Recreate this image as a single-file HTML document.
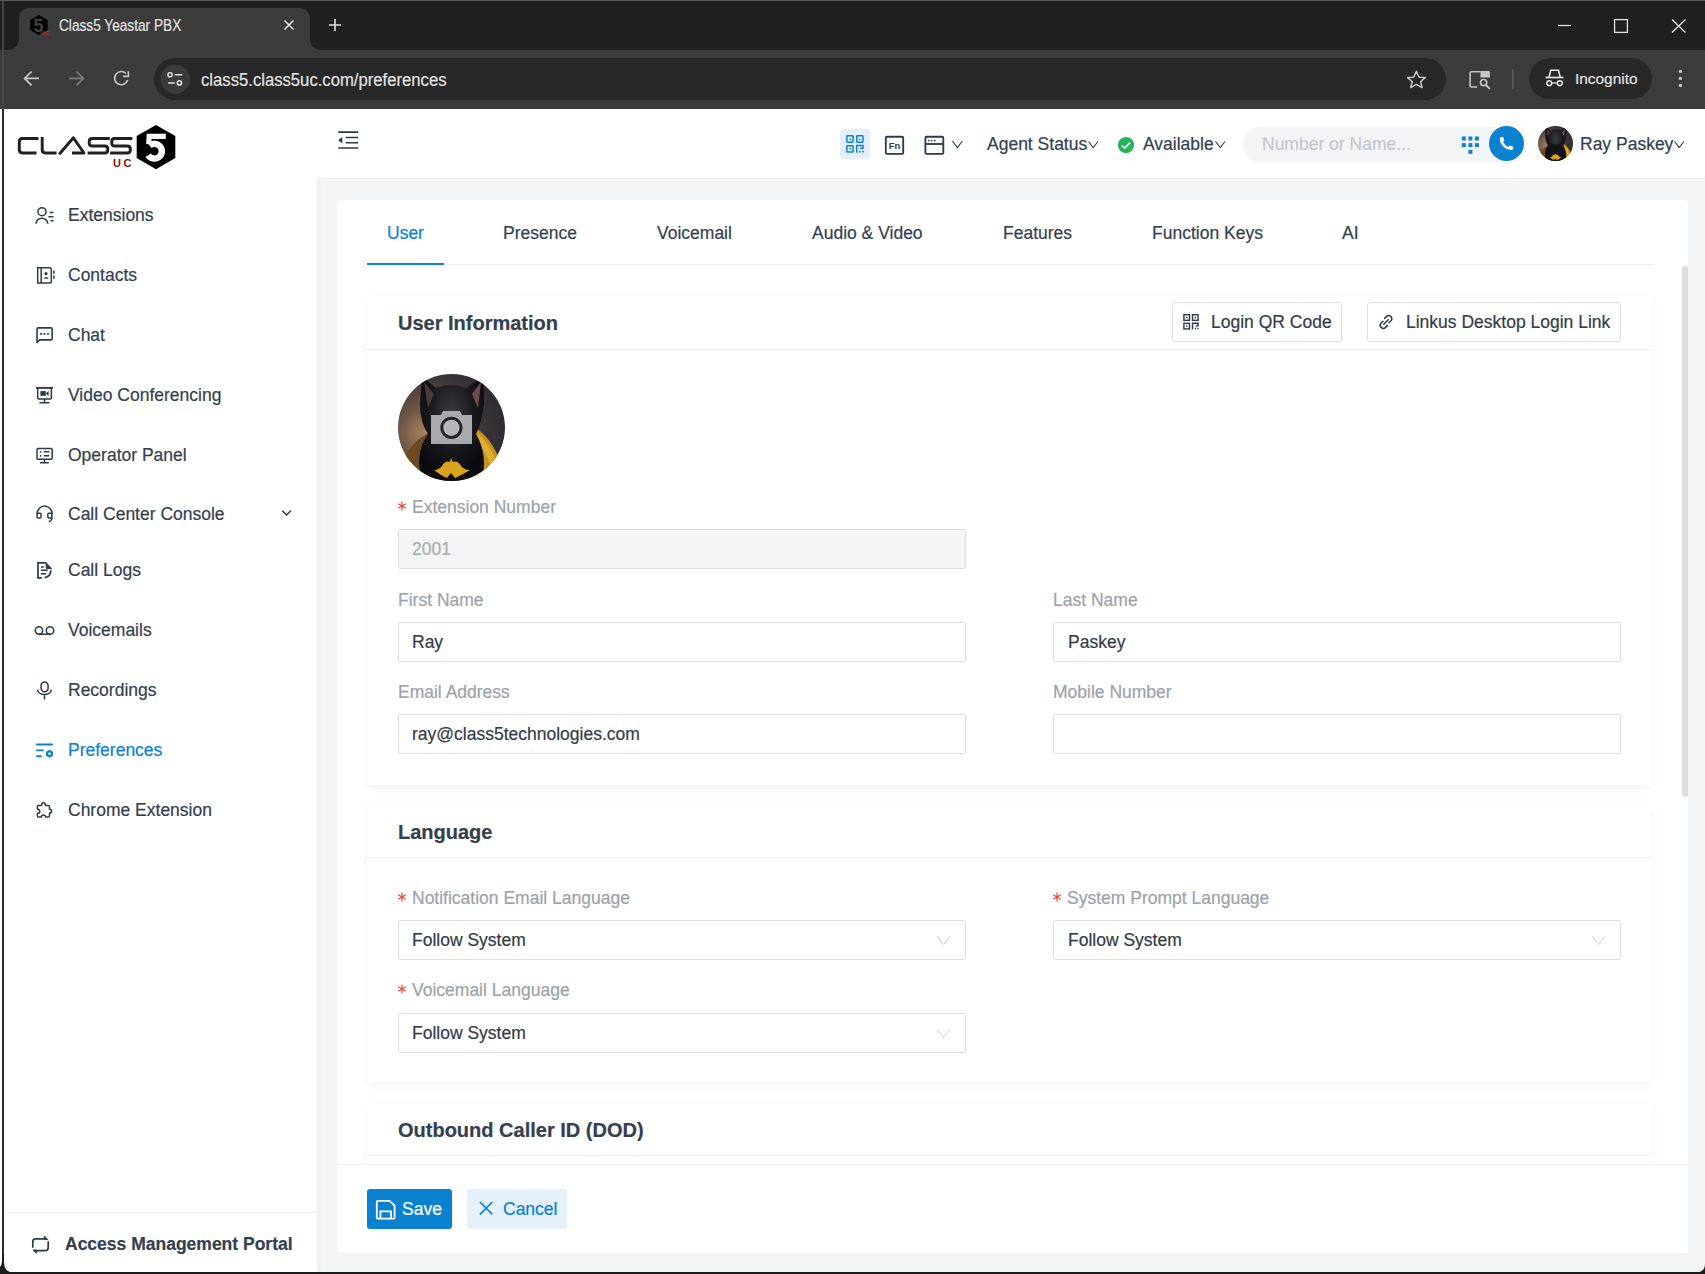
<!DOCTYPE html>
<html><head><meta charset="utf-8">
<style>
*{box-sizing:border-box;margin:0;padding:0}
html,body{width:1705px;height:1274px;overflow:hidden;background:#f4f5f7;font-family:"Liberation Sans",sans-serif;-webkit-text-stroke:0.2px currentColor}
.a{position:absolute}
#frame{left:0;top:0;width:1705px;height:50px;background:#202020}
#toolbar{left:0;top:50px;width:1705px;height:59px;background:#3c3c3c}
#tab{left:19px;top:8px;width:291px;height:42px;background:#3c3c3c;border-radius:10px 10px 0 0}
#tab:before,#tab:after{content:"";position:absolute;bottom:0;width:10px;height:10px;background:radial-gradient(circle at 0 0,transparent 10px,#3c3c3c 10.5px)}
#tab:before{left:-10px;background:radial-gradient(circle at 0 0,transparent 9.5px,#3c3c3c 10px)}
#tab:after{right:-10px;background:radial-gradient(circle at 100% 0,transparent 9.5px,#3c3c3c 10px)}
.tabtitle{left:59px;top:17px;font-size:15.6px;transform-origin:0 0;transform:scaleX(0.876);color:#e3e3e3;white-space:nowrap}
#omni{left:154px;top:58px;width:1292px;height:42px;border-radius:21px;background:#282828}
.url{left:201px;top:70px;font-size:18px;transform-origin:0 0;transform:scaleX(0.926);color:#e3e3e3;white-space:nowrap}
#incog{left:1529px;top:58px;width:123px;height:41px;border-radius:21px;background:#282828}
.inctxt{left:1575px;top:70px;font-size:15.4px;color:#e3e3e3;white-space:nowrap}
#page{left:0;top:109px;width:1705px;height:1165px;background:#f4f5f7}
#winl{left:2px;top:109px;width:2px;height:1165px;background:#2a2a2a}
#winl2{left:2px;top:1px;width:2px;height:108px;background:#464646}
#winb{left:0;top:1272px;width:1705px;height:2px;background:#1c1c1c}
#side{left:4px;top:109px;width:313px;height:1163px;background:#fff;box-shadow:2px 0 6px rgba(0,0,0,.03)}
#header{left:317px;top:109px;width:1388px;height:70px;background:#fff;border-bottom:1px solid #eceef1}
.hdr{top:134px;font-size:17.5px;color:#333f4f;white-space:nowrap}
.nav{left:68px;font-size:17.5px;color:#333f4f;white-space:nowrap}
.nav.act{color:#0a82d0}
.ico{position:absolute}
#card{left:337px;top:200px;width:1351px;height:1053px;background:#fff;border-radius:3px}
.tabs{top:223px;font-size:17.5px;color:#333f4f;white-space:nowrap}
.tabs.act{color:#0a82d0}
#tabline{left:367px;top:264px;width:1286px;height:1px;background:#eceef1}
#tabul{left:367px;top:262.5px;width:77px;height:2.5px;background:#0a82d0}
.sec{left:367px;width:1285px;background:#fff;border-radius:2px;box-shadow:0 3px 10px rgba(0,0,0,.055)}
.sech{left:398px;font-size:20px;font-weight:bold;color:#333f4f;white-space:nowrap}
.secline{left:367px;width:1285px;height:1px;background:#eceef1}
.lbl{font-size:17.5px;color:#9da2a9;white-space:nowrap}
.ast{position:absolute;left:-1.7px;top:3.4px}
.lblr{padding-left:14px}
.inp{width:568px;height:40px;border:1px solid #dcdfe4;border-radius:2px;background:#fff}
.inp.dis{background:#f4f5f7}
.val{font-size:17.5px;color:#333c48;white-space:nowrap}
.btn{border:1px solid #dcdfe4;border-radius:3px;background:#fff;height:40px}
</style></head><body>
<div class="a" id="frame"></div>
<div class="a" id="toolbar"></div>
<div class="a" id="tab"></div>
<div class="a tabtitle">Class5 Yeastar PBX</div>
<div class="a" id="omni"></div>
<div class="a url">class5.class5uc.com/preferences</div>
<div class="a" id="incog"></div>
<div class="a inctxt">Incognito</div>


<!-- browser chrome -->
<div class="a" style="left:0;top:0;width:1705px;height:1px;background:#5b5b5b"></div>
<svg class="a" style="left:0;top:0" width="1705" height="110" viewBox="0 0 1705 110">
  <!-- favicon -->
  <polygon points="38.8,14.9 47.6,20 47.6,30 38.8,35 30,30 30,20" fill="#000"/>
  <text x="38.6" y="31.9" font-family="Liberation Sans" font-weight="bold" font-size="18" fill="#404040" text-anchor="middle">5</text>
  <text x="41" y="35" font-family="Liberation Sans" font-weight="bold" font-size="5" fill="#c0282c" letter-spacing="0.5">UC</text>
  <!-- tab close -->
  <path d="M284.5,20.5 L293.5,29.5 M293.5,20.5 L284.5,29.5" stroke="#e3e3e3" stroke-width="1.6"/>
  <!-- new tab -->
  <path d="M335,19 V31 M329,25 H341" stroke="#e3e3e3" stroke-width="1.6"/>
  <!-- window controls -->
  <path d="M1558,25.5 H1571" stroke="#e3e3e3" stroke-width="1.3"/>
  <rect x="1614.6" y="19.6" width="12.8" height="12.8" fill="none" stroke="#e3e3e3" stroke-width="1.3"/>
  <path d="M1672,19.5 L1685.5,32.5 M1685.5,19.5 L1672,32.5" stroke="#e3e3e3" stroke-width="1.3"/>
  <!-- back / fwd / reload -->
  <path d="M39,78.4 H25 M31.6,71.5 L24.6,78.4 L31.6,85.3" fill="none" stroke="#c7c7c7" stroke-width="1.7"/>
  <path d="M69,78.4 H83 M76.4,71.5 L83.4,78.4 L76.4,85.3" fill="none" stroke="#7c7c7c" stroke-width="1.7"/>
  <path d="M127.6,80 A6.6,6.6 0 1 1 126,73.5" fill="none" stroke="#c7c7c7" stroke-width="1.7"/>
  <path d="M128.4,71.2 V76.4 H123.2" fill="none" stroke="#c7c7c7" stroke-width="1.7"/>
  <!-- site info -->
  <circle cx="175.2" cy="79.2" r="14.7" fill="#3b3b3b"/>
  <circle cx="170" cy="74.8" r="2.1" fill="none" stroke="#e3e3e3" stroke-width="1.5"/>
  <path d="M174.8,74.8 H182.2 M168.2,82.9 H174.8" stroke="#e3e3e3" stroke-width="1.5"/>
  <circle cx="179.4" cy="82.9" r="2.1" fill="none" stroke="#e3e3e3" stroke-width="1.5"/>
  <!-- star -->
  <polygon points="1416.4,71.2 1419.1,77.3 1425.2,77.6 1420.6,81.8 1422.1,87.6 1416.4,84.4 1410.7,87.6 1412.2,81.8 1407.6,77.6 1413.7,77.3" fill="none" stroke="#c7c7c7" stroke-width="1.5" stroke-linejoin="round"/>
  <!-- lens -->
  <path d="M1477.2,87 H1471.4 Q1470.1,87 1470.1,85.7 V73.1 Q1470.1,71.8 1471.4,71.8 H1480.6" fill="none" stroke="#c7c7c7" stroke-width="1.6"/>
  <path d="M1480.5,71 H1488.6 Q1489.9,71 1489.9,72.3 V77.4 H1480.5 Z" fill="#c7c7c7"/>
  <circle cx="1483.6" cy="82.6" r="3.1" fill="none" stroke="#c7c7c7" stroke-width="1.7"/>
  <path d="M1485.9,85 L1489.8,88.9" stroke="#c7c7c7" stroke-width="1.8"/>
  <rect x="1512" y="69.5" width="1.6" height="19.4" fill="#5e5e5e"/>
  <!-- incognito icon -->
  <path d="M1549,77.2 L1550.7,70.2 H1558.5 L1560.2,77.2" fill="none" stroke="#e3e3e3" stroke-width="1.6"/>
  <path d="M1545.6,77.5 H1563.5" stroke="#e3e3e3" stroke-width="1.7"/>
  <circle cx="1549.3" cy="83.2" r="2.4" fill="none" stroke="#e3e3e3" stroke-width="1.5"/>
  <circle cx="1559.8" cy="83.2" r="2.4" fill="none" stroke="#e3e3e3" stroke-width="1.5"/>
  <path d="M1551.7,83 H1557.4" stroke="#e3e3e3" stroke-width="1.3"/>
  <!-- kebab -->
  <circle cx="1680.4" cy="71.4" r="1.7" fill="#c7c7c7"/>
  <circle cx="1680.4" cy="78.4" r="1.7" fill="#c7c7c7"/>
  <circle cx="1680.4" cy="85.5" r="1.7" fill="#c7c7c7"/>
</svg>

<div class="a" id="page"></div>
<div class="a" id="side"></div>
<div class="a" id="header"></div>
<!-- header contents -->
<svg class="a" style="left:330px;top:120px" width="40" height="40" viewBox="0 0 40 40" fill="none" stroke="#2e3a4a" stroke-width="1.6">
 <path d="M8.2,12.1 H28.2 M15.7,17.5 H28.2 M15.7,22.8 H28.2 M8.2,28 H28.2"/>
 <path d="M8.2,20.2 L12.3,17 V23.4 Z" fill="#2e3a4a" stroke="none"/>
</svg>
<div class="a" style="left:840px;top:129px;width:30px;height:30px;border-radius:4px;background:#e3f0fb"></div>
<svg class="a" style="left:835px;top:125px" width="40" height="40" viewBox="0 0 40 40" fill="none" stroke="#0a82d0" stroke-width="1.5">
 <rect x="11.85" y="10.75" width="6.2" height="6.4" rx="0.6"/><rect x="21.75" y="10.75" width="6.2" height="6.4" rx="0.6"/><rect x="11.85" y="20.65" width="6.2" height="6.4" rx="0.6"/>
 <circle cx="15.4" cy="14.3" r="0.9" fill="#0a82d0" stroke="none"/><circle cx="24.6" cy="14.3" r="0.9" fill="#0a82d0" stroke="none"/><circle cx="15.2" cy="23.6" r="0.9" fill="#0a82d0" stroke="none"/>
 <path d="M21.7,27.8 V20.6 H27.9 V23.2 H25.2"/>
 <rect x="24" y="25.9" width="1.6" height="1.6" fill="#0a82d0" stroke="none"/><rect x="27.1" y="25.9" width="1.6" height="1.6" fill="#0a82d0" stroke="none"/>
</svg>
<svg class="a" style="left:878px;top:125px" width="90" height="40" viewBox="0 0 90 40" fill="none" stroke="#2e3a4a" stroke-width="1.85">
 <rect x="7.8" y="11.7" width="17.4" height="17.2" rx="1.2"/>
 <text x="10.7" y="23.8" font-family="Liberation Sans" font-weight="bold" font-size="9.4" fill="#2e3a4a" stroke="none">Fn</text>
 <rect x="47.4" y="11.7" width="17.9" height="17.2" rx="1.2"/>
 <path d="M47.4,19 H65.3"/>
 <circle cx="50.7" cy="15.6" r="0.9" fill="#2e3a4a" stroke="none"/><circle cx="53.6" cy="15.6" r="0.9" fill="#2e3a4a" stroke="none"/><circle cx="56.8" cy="15.6" r="0.9" fill="#2e3a4a" stroke="none"/>
 <path d="M74.4,16 L79.4,22.6 L84.4,16" stroke-width="1.1"/>
</svg>
<div class="a hdr" style="left:987px">Agent Status</div>
<svg class="a" style="left:1086px;top:138px" width="16" height="14" viewBox="0 0 16 14" fill="none" stroke="#2e3a4a" stroke-width="1.1"><path d="M2.5,3.5 L7.2,9.5 L12,3.5"/></svg>
<svg class="a" style="left:1116px;top:135px" width="20" height="20" viewBox="0 0 20 20">
 <circle cx="10" cy="10.05" r="8.1" fill="#23b35a"/><path d="M5.8,10.3 L8.7,13 L14.1,7.6" fill="none" stroke="#fff" stroke-width="1.7"/>
</svg>
<div class="a hdr" style="left:1143px">Available</div>
<svg class="a" style="left:1213px;top:138px" width="16" height="14" viewBox="0 0 16 14" fill="none" stroke="#2e3a4a" stroke-width="1.1"><path d="M2.5,3.5 L7.2,9.5 L12,3.5"/></svg>
<div class="a" style="left:1243px;top:127px;width:270px;height:35px;border-radius:17.5px;background:#f3f4f6"></div>
<div class="a hdr" style="left:1262px;color:#c4c7cc">Number or Name...</div>
<svg class="a" style="left:1455px;top:122px" width="80" height="44" viewBox="0 0 80 44" fill="#0a82d0">
 <rect x="6.8" y="14.5" width="4" height="4"/><rect x="13.4" y="14.5" width="4" height="4"/><rect x="19.9" y="14.5" width="4" height="4"/>
 <rect x="6.8" y="21.1" width="4" height="4"/><rect x="13.4" y="21.1" width="4" height="4"/><rect x="19.9" y="21.1" width="4" height="4"/>
 <rect x="13.4" y="27.9" width="4" height="4"/>
 <circle cx="51.5" cy="21.5" r="17.5"/>
 <path d="M44.8,16.2 Q45.3,14.9 46.6,15 L48.2,15.1 L49.3,18.6 L48.1,19.9 Q49.5,23.5 53.5,24.9 L54.8,23.6 L58.2,24.8 L58.2,26.6 Q58.1,27.9 56.8,28 Q50.6,27.8 47.2,23.6 Q44.6,20.3 44.8,16.2 Z" fill="#fff"/>
</svg>
<!-- header avatar -->
<svg class="a" style="left:1538px;top:126px" width="35" height="35" viewBox="0 0 107 107">
 <defs>
  <clipPath id="avc2"><circle cx="53.5" cy="53.5" r="53.5"/></clipPath>
  <radialGradient id="avbg2" cx="0.25" cy="0.55" r="0.8"><stop offset="0" stop-color="#a88462"/><stop offset="0.3" stop-color="#6e5646"/><stop offset="0.65" stop-color="#3e363a"/><stop offset="1" stop-color="#2a2a32"/></radialGradient>
  <radialGradient id="avhd2" cx="0.5" cy="0.35" r="0.6"><stop offset="0" stop-color="#3a3a40"/><stop offset="0.6" stop-color="#18181c"/><stop offset="1" stop-color="#0c0c10"/></radialGradient>
 </defs>
 <g clip-path="url(#avc2)">
  <rect width="107" height="107" fill="url(#avbg2)"/>
  <path d="M0,107 L8,80 Q20,62 34,58 L40,107 Z" fill="#6e4a22"/>
  <path d="M107,107 L100,82 Q90,60 74,52 L66,107 Z" fill="#c79320"/>
  <path d="M80,60 Q92,70 98,88 L92,90 Q86,74 76,66 Z" fill="#e0ad30"/>
  <path d="M24,2 L38,14 Q53,8 68,14 L86,2 L86,30 Q84,48 78,60 Q90,80 84,107 L24,107 Q16,80 30,60 Q22,48 22,30 Z" fill="url(#avhd2)"/>
  <path d="M26,8 L36,20 L30,34 Z" fill="#4a3a3e"/><path d="M83,8 L74,20 L80,34 Z" fill="#6a4e50"/>
  <path d="M44,92 Q47,86 52,88 L53,84 L55,88 Q60,86 63,92 Q66,96 72,96 Q62,102 57,104 L53,99 L49,104 Q42,101 36,96 Q41,96 44,92 Z" fill="#d9a31e"/>
  
  
  <path d="M36,52 Q53,62 72,52 L70,70 Q53,78 38,70 Z" fill="#141418"/>
 </g>
</svg>


<div class="a hdr" style="left:1580px">Ray Paskey</div>
<svg class="a" style="left:1672px;top:138px" width="16" height="14" viewBox="0 0 16 14" fill="none" stroke="#2e3a4a" stroke-width="1.1"><path d="M2.5,3.5 L7.2,9.5 L12,3.5"/></svg>


<div class="a nav" style="top:205px">Extensions</div>
<div class="a nav" style="top:265px">Contacts</div>
<div class="a nav" style="top:325px">Chat</div>
<div class="a nav" style="top:385px">Video Conferencing</div>
<div class="a nav" style="top:445px">Operator Panel</div>
<div class="a nav" style="top:504px">Call Center Console</div>
<div class="a nav" style="top:560px">Call Logs</div>
<div class="a nav" style="top:620px">Voicemails</div>
<div class="a nav" style="top:680px">Recordings</div>
<div class="a nav act" style="top:740px">Preferences</div>
<div class="a nav" style="top:800px">Chrome Extension</div>
<div class="a" style="left:4px;top:1212px;width:313px;height:1px;background:#eceef1"></div>
<div class="a nav" style="left:65px;top:1234px;font-weight:bold">Access Management Portal</div>


<!-- logo -->
<svg class="a" style="left:10px;top:118px" width="180" height="60" viewBox="0 0 180 60">
 <g fill="none" stroke="#231f20" stroke-width="2.9" stroke-linejoin="round">
  <path d="M28.5,20.5 H12.5 Q9.3,20.5 9.3,23.7 V31.8 Q9.3,35 12.5,35 H26.5"/>
  <path d="M32.2,19.1 V31.8 Q32.2,35 35.4,35 H46.5"/>
  <path d="M62,35 H74 L63.4,19.8 L49.2,36.3"/>
  <path d="M99.8,20.5 H82.2 Q79.2,20.5 79.2,23.5 V25 Q79.2,28 82.2,28 H94.8 Q97.8,28 97.8,31 V32 Q97.8,35 94.8,35 H77.6"/>
  <path d="M122.3,20.5 H104.7 Q101.7,20.5 101.7,23.5 V25 Q101.7,28 104.7,28 H117.3 Q120.3,28 120.3,31 V32 Q120.3,35 117.3,35 H100.1"/>
 </g>
 <polygon points="146,6.9 165.3,18 165.3,40.1 146,51.2 126.7,40.1 126.7,18" fill="#000"/>
 <path d="M136.7,15.8 H155.8 V21.1 H141.5 V26 H136.2 Z" fill="#fff"/><path d="M139.6,27.6 A7.4,7.4 0 1 1 138.2,37.2" fill="none" stroke="#fff" stroke-width="6.4"/>
 <text x="103" y="48.6" font-family="Liberation Sans" font-weight="bold" font-size="11" fill="#7d1418" letter-spacing="2.6">UC</text>
</svg>

<!-- sidebar icons -->
<svg class="a" style="left:30px;top:200px" width="30" height="30" viewBox="0 0 30 30" fill="none" stroke="#2e3a4a" stroke-width="1.5">
 <circle cx="12" cy="11.65" r="4"/><path d="M5.9,23.8 A6,5.6 0 0 1 17.9,23.8"/>
 <path d="M19.8,12.5 H23.5 M18.4,16.7 H23.5 M20.5,20.8 H23.5"/>
</svg>
<svg class="a" style="left:30px;top:260px" width="30" height="30" viewBox="0 0 30 30" fill="none" stroke="#2e3a4a" stroke-width="1.5">
 <path d="M7.7,7.7 H19.8 Q21.3,7.7 21.3,9.2 V21.6 Q21.3,23.1 19.8,23.1 H7.7 Z"/><path d="M11.2,7.7 V23.1"/>
 <path d="M23.9,10.4 V13.7 M23.9,15.5 V18.8"/>
 <circle cx="16" cy="13.65" r="1.6" fill="#2e3a4a" stroke="none"/><path d="M14,18.8 L14.6,17.2 H17.9 L18.6,18.8 Z" fill="#2e3a4a" stroke="none"/>
</svg>
<svg class="a" style="left:30px;top:320px" width="30" height="30" viewBox="0 0 30 30" fill="none" stroke="#2e3a4a" stroke-width="1.6">
 <path d="M7.05,23.2 V9 Q7.05,7.85 8.2,7.85 H21 Q22.15,7.85 22.15,9 V18.75 Q22.15,19.9 21,19.9 H9.8 L7.05,22.5"/>
 <path d="M10.2,13.9 H12 M13.6,13.9 H15.4 M17.1,13.9 H18.9" stroke-width="1.8"/>
</svg>
<svg class="a" style="left:30px;top:380px" width="30" height="30" viewBox="0 0 30 30" fill="none" stroke="#2e3a4a" stroke-width="1.5">
 <path d="M6,7.9 H23" stroke-width="1.9"/>
 <path d="M7.7,7.9 V17.9 Q7.7,18.95 8.75,18.95 H20.3 Q21.35,18.95 21.35,17.9 V7.9"/>
 <path d="M14.5,19 V22.5 M9.4,22.8 H19.5" stroke-width="1.5"/>
 <rect x="10.4" y="11.1" width="5.4" height="4.7" fill="#2e3a4a" stroke="none"/>
 <path d="M15.6,13.45 L18.6,11 V15.9 Z" fill="#2e3a4a" stroke="none"/>
</svg>
<svg class="a" style="left:30px;top:440px" width="30" height="30" viewBox="0 0 30 30" fill="none" stroke="#2e3a4a" stroke-width="1.5">
 <rect x="7" y="8.5" width="15.2" height="10.8" rx="1"/>
 <path d="M14.5,19.5 V22.5 M10.1,22.7 H18.8"/>
 <path d="M14.4,11.8 H18.8 M14.4,15.8 H18.8" stroke-linecap="round"/>
 <circle cx="10.6" cy="11.8" r="0.9" fill="#2e3a4a" stroke="none"/><circle cx="10.6" cy="15.8" r="0.9" fill="#2e3a4a" stroke="none"/>
</svg>
<svg class="a" style="left:30px;top:498px" width="30" height="30" viewBox="0 0 30 30" fill="none" stroke="#2e3a4a" stroke-width="1.5">
 <path d="M7,16 A7.6,7.9 0 0 1 22.2,16"/>
 <rect x="7.1" y="15.35" width="3.95" height="4.6" rx="1"/>
 <rect x="17.85" y="15.35" width="4" height="4.6" rx="1"/>
 <path d="M22,19.5 Q22,22.5 18.8,23.8"/>
</svg>
<svg class="a" style="left:30px;top:555px" width="30" height="30" viewBox="0 0 30 30" fill="none" stroke="#2e3a4a" stroke-width="1.7">
 <path d="M11.8,22.95 H8 V7.9 H16.5"/>
 <path d="M16.2,7.9 L21.6,13.6 H16.2 Z" fill="#2e3a4a" stroke-width="1"/>
 <path d="M11.1,12 H13.9 M11.1,15.3 H17.7 M11.1,18.8 H16" stroke-width="1.6"/>
 <path d="M20.8,15.3 Q20.8,21.8 14.6,22.6" stroke-width="1.8"/>
</svg>
<svg class="a" style="left:30px;top:615px" width="30" height="30" viewBox="0 0 30 30" fill="none" stroke="#2e3a4a" stroke-width="1.5">
 <circle cx="8.95" cy="15.5" r="3.7"/><circle cx="20" cy="15.5" r="3.7"/><path d="M8.95,19.2 H20"/>
</svg>
<svg class="a" style="left:30px;top:675px" width="30" height="30" viewBox="0 0 30 30" fill="none" stroke="#2e3a4a" stroke-width="1.5">
 <rect x="11.1" y="6.9" width="7" height="9.8" rx="3.5"/>
 <path d="M7.5,14.6 A7,5.7 0 0 0 21.4,14.6"/><path d="M14.5,20.3 V24.5"/>
</svg>
<svg class="a" style="left:30px;top:735px" width="30" height="30" viewBox="0 0 30 30" fill="none" stroke="#0a82d0" stroke-width="1.9" stroke-linecap="round">
 <path d="M7,9.5 H22.1 M7,15.4 H12.9 M7,21.3 H11"/>
 <path d="M19.5,14.8 L23,16.8 V20.8 L19.5,22.8 L16,20.8 V16.8 Z" fill="#0a82d0" stroke="none"/>
 <circle cx="19.5" cy="18.8" r="1.3" fill="#fff" stroke="none"/>
</svg>
<svg class="a" style="left:30px;top:795px" width="30" height="30" viewBox="0 0 30 30" fill="none" stroke="#2e3a4a" stroke-width="1.5" stroke-linejoin="round">
 <path d="M8.4,10.4 H11.6 Q11.6,7.8 13.5,7.8 Q15.4,7.8 15.4,10.4 H18.5 Q19.5,10.4 19.5,11.4 V14.3 Q21.6,14.3 21.6,16.3 Q21.6,18.2 19.5,18.2 V21.1 Q19.5,22.1 18.5,22.1 H15.6 Q15.6,20.1 13.4,20.1 Q11.4,20.1 11.3,22.1 H8.4 Q7.4,22.1 7.4,21.1 V18.4 Q9.8,18.4 9.8,16.3 Q9.8,14.2 7.4,14.2 V11.4 Q7.4,10.4 8.4,10.4 Z"/>
</svg>
<svg class="a" style="left:25px;top:1228px" width="30" height="30" viewBox="0 0 30 30" fill="none" stroke="#2e3a4a" stroke-width="1.7">
 <path d="M7.8,19.8 V13.6 Q7.8,10.8 10.6,10.8 H21.5"/><path d="M19.3,8 L22.8,11.5 H19.3 Z" fill="#2e3a4a" stroke-width="0.8"/>
 <path d="M23.2,13.2 V19.8 Q23.2,22.6 20.4,22.6 H9"/><path d="M11.4,25.4 L8,22 H11.4 Z" fill="#2e3a4a" stroke-width="0.8"/>
</svg>
<svg class="a" style="left:279px;top:505px" width="16" height="16" viewBox="0 0 16 16" fill="none" stroke="#2e3a4a" stroke-width="1.6">
 <path d="M3.2,5.8 L7.5,10 L11.8,5.8"/>
</svg>

<div class="a" id="card"></div>
<div class="a tabs act" style="left:387px">User</div>
<div class="a tabs" style="left:503px">Presence</div>
<div class="a tabs" style="left:657px">Voicemail</div>
<div class="a tabs" style="left:812px">Audio &amp; Video</div>
<div class="a tabs" style="left:1003px">Features</div>
<div class="a tabs" style="left:1152px">Function Keys</div>
<div class="a tabs" style="left:1342px">AI</div>
<div class="a" id="tabline"></div>
<div class="a" id="tabul"></div>

<!-- User information section -->
<div class="a sec" style="top:296px;height:489px"></div>
<div class="a sech" style="top:312px">User Information</div>
<div class="a secline" style="top:349px"></div>

<div class="a lbl lblr" style="left:398px;top:497px"><svg class="ast" width="12" height="12" viewBox="0 0 12 12" stroke="#e5483e" stroke-width="1.2"><path d="M6,1.6 V10.4 M2.2,3.8 L9.8,8.2 M9.8,3.8 L2.2,8.2"/></svg>Extension Number</div>
<div class="a inp dis" style="left:398px;top:529px"></div>
<div class="a val" style="left:412px;top:539px;color:#a8acb2">2001</div>

<div class="a lbl" style="left:398px;top:590px">First Name</div>
<div class="a inp" style="left:398px;top:622px"></div>
<div class="a val" style="left:412px;top:632px">Ray</div>
<div class="a lbl" style="left:1053px;top:590px">Last Name</div>
<div class="a inp" style="left:1053px;top:622px"></div>
<div class="a val" style="left:1068px;top:632px">Paskey</div>

<div class="a lbl" style="left:398px;top:682px">Email Address</div>
<div class="a inp" style="left:398px;top:714px"></div>
<div class="a val" style="left:412px;top:724px">ray@class5technologies.com</div>
<div class="a lbl" style="left:1053px;top:682px">Mobile Number</div>
<div class="a inp" style="left:1053px;top:714px"></div>

<!-- Language -->
<div class="a sec" style="top:805px;height:277px"></div>
<div class="a sech" style="top:821px">Language</div>
<div class="a secline" style="top:857px"></div>

<!-- Outbound -->
<div class="a sec" style="top:1104px;height:60px"></div>
<div class="a sech" style="top:1119px">Outbound Caller ID (DOD)</div>
<div class="a secline" style="top:1155px"></div>

<div class="a" style="left:0;top:109px;width:2px;height:1163px;background:#fafbfc"></div>
<div class="a" id="winl"></div><div class="a" id="winl2"></div>
<svg class="a" style="left:0;top:1254px" width="24" height="20" viewBox="0 0 24 20"><path d="M2,0 H4 V8 Q4,18.5 14,18.5 H24 V20 H0 V13 Q2,11 2,6 Z" fill="#1c1c1c"/></svg>
<svg class="a" style="left:1685px;top:1254px" width="20" height="20" viewBox="0 0 20 20"><path d="M20,10 Q20,18.5 10,18.5 H0 V20 H20 Z" fill="#1c1c1c"/></svg>
<div class="a" id="winb"></div>

<!-- section buttons -->
<div class="a btn" style="left:1172px;top:302px;width:170px;height:40px"></div>
<svg class="a" style="left:1180px;top:310px" width="24" height="24" viewBox="0 0 24 24" fill="none" stroke="#2e3a4a" stroke-width="1.4">
 <rect x="3.9" y="4.7" width="5.6" height="5.6"/><rect x="12.5" y="4.7" width="5.6" height="5.6"/><rect x="3.9" y="13.3" width="5.6" height="5.6"/>
 <rect x="6" y="6.8" width="1.4" height="1.4" fill="#2e3a4a" stroke="none"/><rect x="14.6" y="6.8" width="1.4" height="1.4" fill="#2e3a4a" stroke="none"/><rect x="6" y="15.4" width="1.4" height="1.4" fill="#2e3a4a" stroke="none"/>
 <path d="M12.5,19.5 V13.3 H18.1 V15.9 H15.6"/><rect x="14.8" y="17.8" width="1.4" height="1.4" fill="#2e3a4a" stroke="none"/><rect x="17.4" y="17.8" width="1.4" height="1.4" fill="#2e3a4a" stroke="none"/>
</svg>
<div class="a val" style="left:1211px;top:312px">Login QR Code</div>
<div class="a btn" style="left:1367px;top:302px;width:254px;height:40px"></div>
<svg class="a" style="left:1374px;top:310px" width="24" height="24" viewBox="0 0 24 24" fill="none" stroke="#2e3a4a" stroke-width="1.5" stroke-linecap="round">
 <path d="M10.6,8.4 L12.4,6.6 Q14.6,4.4 16.8,6.6 Q19,8.8 16.8,11 L15,12.8"/>
 <path d="M13.4,15.6 L11.6,17.4 Q9.4,19.6 7.2,17.4 Q5,15.2 7.2,13 L9,11.2"/>
 <path d="M9.8,14.2 L14.2,9.8"/>
</svg>
<div class="a val" style="left:1406px;top:312px">Linkus Desktop Login Link</div>

<!-- avatar -->
<svg class="a" style="left:398px;top:374px" width="107" height="107" viewBox="0 0 107 107">
 <defs>
  <clipPath id="avc"><circle cx="53.5" cy="53.5" r="53.5"/></clipPath>
  <radialGradient id="avbg" cx="0.25" cy="0.55" r="0.8"><stop offset="0" stop-color="#a88462"/><stop offset="0.3" stop-color="#6e5646"/><stop offset="0.65" stop-color="#3e363a"/><stop offset="1" stop-color="#2a2a32"/></radialGradient>
  <radialGradient id="avhd" cx="0.5" cy="0.35" r="0.6"><stop offset="0" stop-color="#3a3a40"/><stop offset="0.6" stop-color="#18181c"/><stop offset="1" stop-color="#0c0c10"/></radialGradient>
 </defs>
 <g clip-path="url(#avc)">
  <rect width="107" height="107" fill="url(#avbg)"/>
  <path d="M0,107 L8,80 Q20,62 34,58 L40,107 Z" fill="#6e4a22"/>
  <path d="M107,107 L100,82 Q90,60 74,52 L66,107 Z" fill="#c79320"/>
  <path d="M80,60 Q92,70 98,88 L92,90 Q86,74 76,66 Z" fill="#e0ad30"/>
  <path d="M24,2 L38,14 Q53,8 68,14 L86,2 L86,30 Q84,48 78,60 Q90,80 84,107 L24,107 Q16,80 30,60 Q22,48 22,30 Z" fill="url(#avhd)"/>
  <path d="M26,8 L36,20 L30,34 Z" fill="#4a3a3e"/><path d="M83,8 L74,20 L80,34 Z" fill="#6a4e50"/>
  <path d="M44,92 Q47,86 52,88 L53,84 L55,88 Q60,86 63,92 Q66,96 72,96 Q62,102 57,104 L53,99 L49,104 Q42,101 36,96 Q41,96 44,92 Z" fill="#d9a31e"/>
  <rect x="33" y="41" width="41" height="29" fill="#a9aaae"/>
  <path d="M43,41 L45,37 H62 L64,41 Z" fill="#a9aaae"/>
  <circle cx="53.4" cy="53.8" r="9.6" fill="#b6b7ba" stroke="#262629" stroke-width="3"/>
 </g>
</svg>

<!-- language selects -->
<div class="a lbl lblr" style="left:398px;top:888px"><svg class="ast" width="12" height="12" viewBox="0 0 12 12" stroke="#e5483e" stroke-width="1.2"><path d="M6,1.6 V10.4 M2.2,3.8 L9.8,8.2 M9.8,3.8 L2.2,8.2"/></svg>Notification Email Language</div>
<div class="a inp" style="left:398px;top:920px"></div>
<div class="a val" style="left:412px;top:930px">Follow System</div>
<div class="a lbl lblr" style="left:1053px;top:888px"><svg class="ast" width="12" height="12" viewBox="0 0 12 12" stroke="#e5483e" stroke-width="1.2"><path d="M6,1.6 V10.4 M2.2,3.8 L9.8,8.2 M9.8,3.8 L2.2,8.2"/></svg>System Prompt Language</div>
<div class="a inp" style="left:1053px;top:920px"></div>
<div class="a val" style="left:1068px;top:930px">Follow System</div>
<div class="a lbl lblr" style="left:398px;top:980px"><svg class="ast" width="12" height="12" viewBox="0 0 12 12" stroke="#e5483e" stroke-width="1.2"><path d="M6,1.6 V10.4 M2.2,3.8 L9.8,8.2 M9.8,3.8 L2.2,8.2"/></svg>Voicemail Language</div>
<div class="a inp" style="left:398px;top:1013px"></div>
<div class="a val" style="left:412px;top:1023px">Follow System</div>
<svg class="a" style="left:934px;top:932px" width="19" height="16" viewBox="0 0 19 16" fill="none" stroke="#cdd0d5" stroke-width="1"><path d="M3.3,4.1 L9.5,12.6 L15.7,4.1"/></svg>
<svg class="a" style="left:1589px;top:932px" width="19" height="16" viewBox="0 0 19 16" fill="none" stroke="#cdd0d5" stroke-width="1"><path d="M3.3,4.1 L9.5,12.6 L15.7,4.1"/></svg>
<svg class="a" style="left:934px;top:1025px" width="19" height="16" viewBox="0 0 19 16" fill="none" stroke="#cdd0d5" stroke-width="1"><path d="M3.3,4.1 L9.5,12.6 L15.7,4.1"/></svg>

<!-- scrollbar -->
<div class="a" style="left:1682px;top:266px;width:5.5px;height:531px;border-radius:3px;background:#dcdee2"></div>

<!-- footer -->
<div class="a" style="left:337px;top:1164px;width:1351px;height:89px;background:#fff;border-top:1px solid #eceef1;border-radius:0 0 3px 3px"></div>
<div class="a" style="left:367px;top:1189px;width:85px;height:40px;border-radius:3px;background:#0a82d0"></div>
<svg class="a" style="left:372px;top:1196px" width="28" height="28" viewBox="0 0 28 28" fill="none" stroke="#fff" stroke-width="1.8">
 <path d="M5.8,4.9 H17.6 L22.6,9.6 V21.6 Q22.6,22.6 21.6,22.6 H5.8 Q4.8,22.6 4.8,21.6 V5.9 Q4.8,4.9 5.8,4.9 Z"/>
 <path d="M8.4,22.4 V15.3 H18.9 V22.4"/>
</svg>
<div class="a val" style="left:402px;top:1199px;color:#fff">Save</div>
<div class="a" style="left:467px;top:1189px;width:100px;height:40px;border-radius:3px;background:#e4f0fa"></div>
<svg class="a" style="left:474px;top:1196px" width="24" height="24" viewBox="0 0 24 24" fill="none" stroke="#0a82d0" stroke-width="1.7"><path d="M6,6 L18.3,18.3 M18.3,6 L6,18.3"/></svg>
<div class="a val" style="left:503px;top:1199px;color:#0a82d0">Cancel</div>
</body></html>
